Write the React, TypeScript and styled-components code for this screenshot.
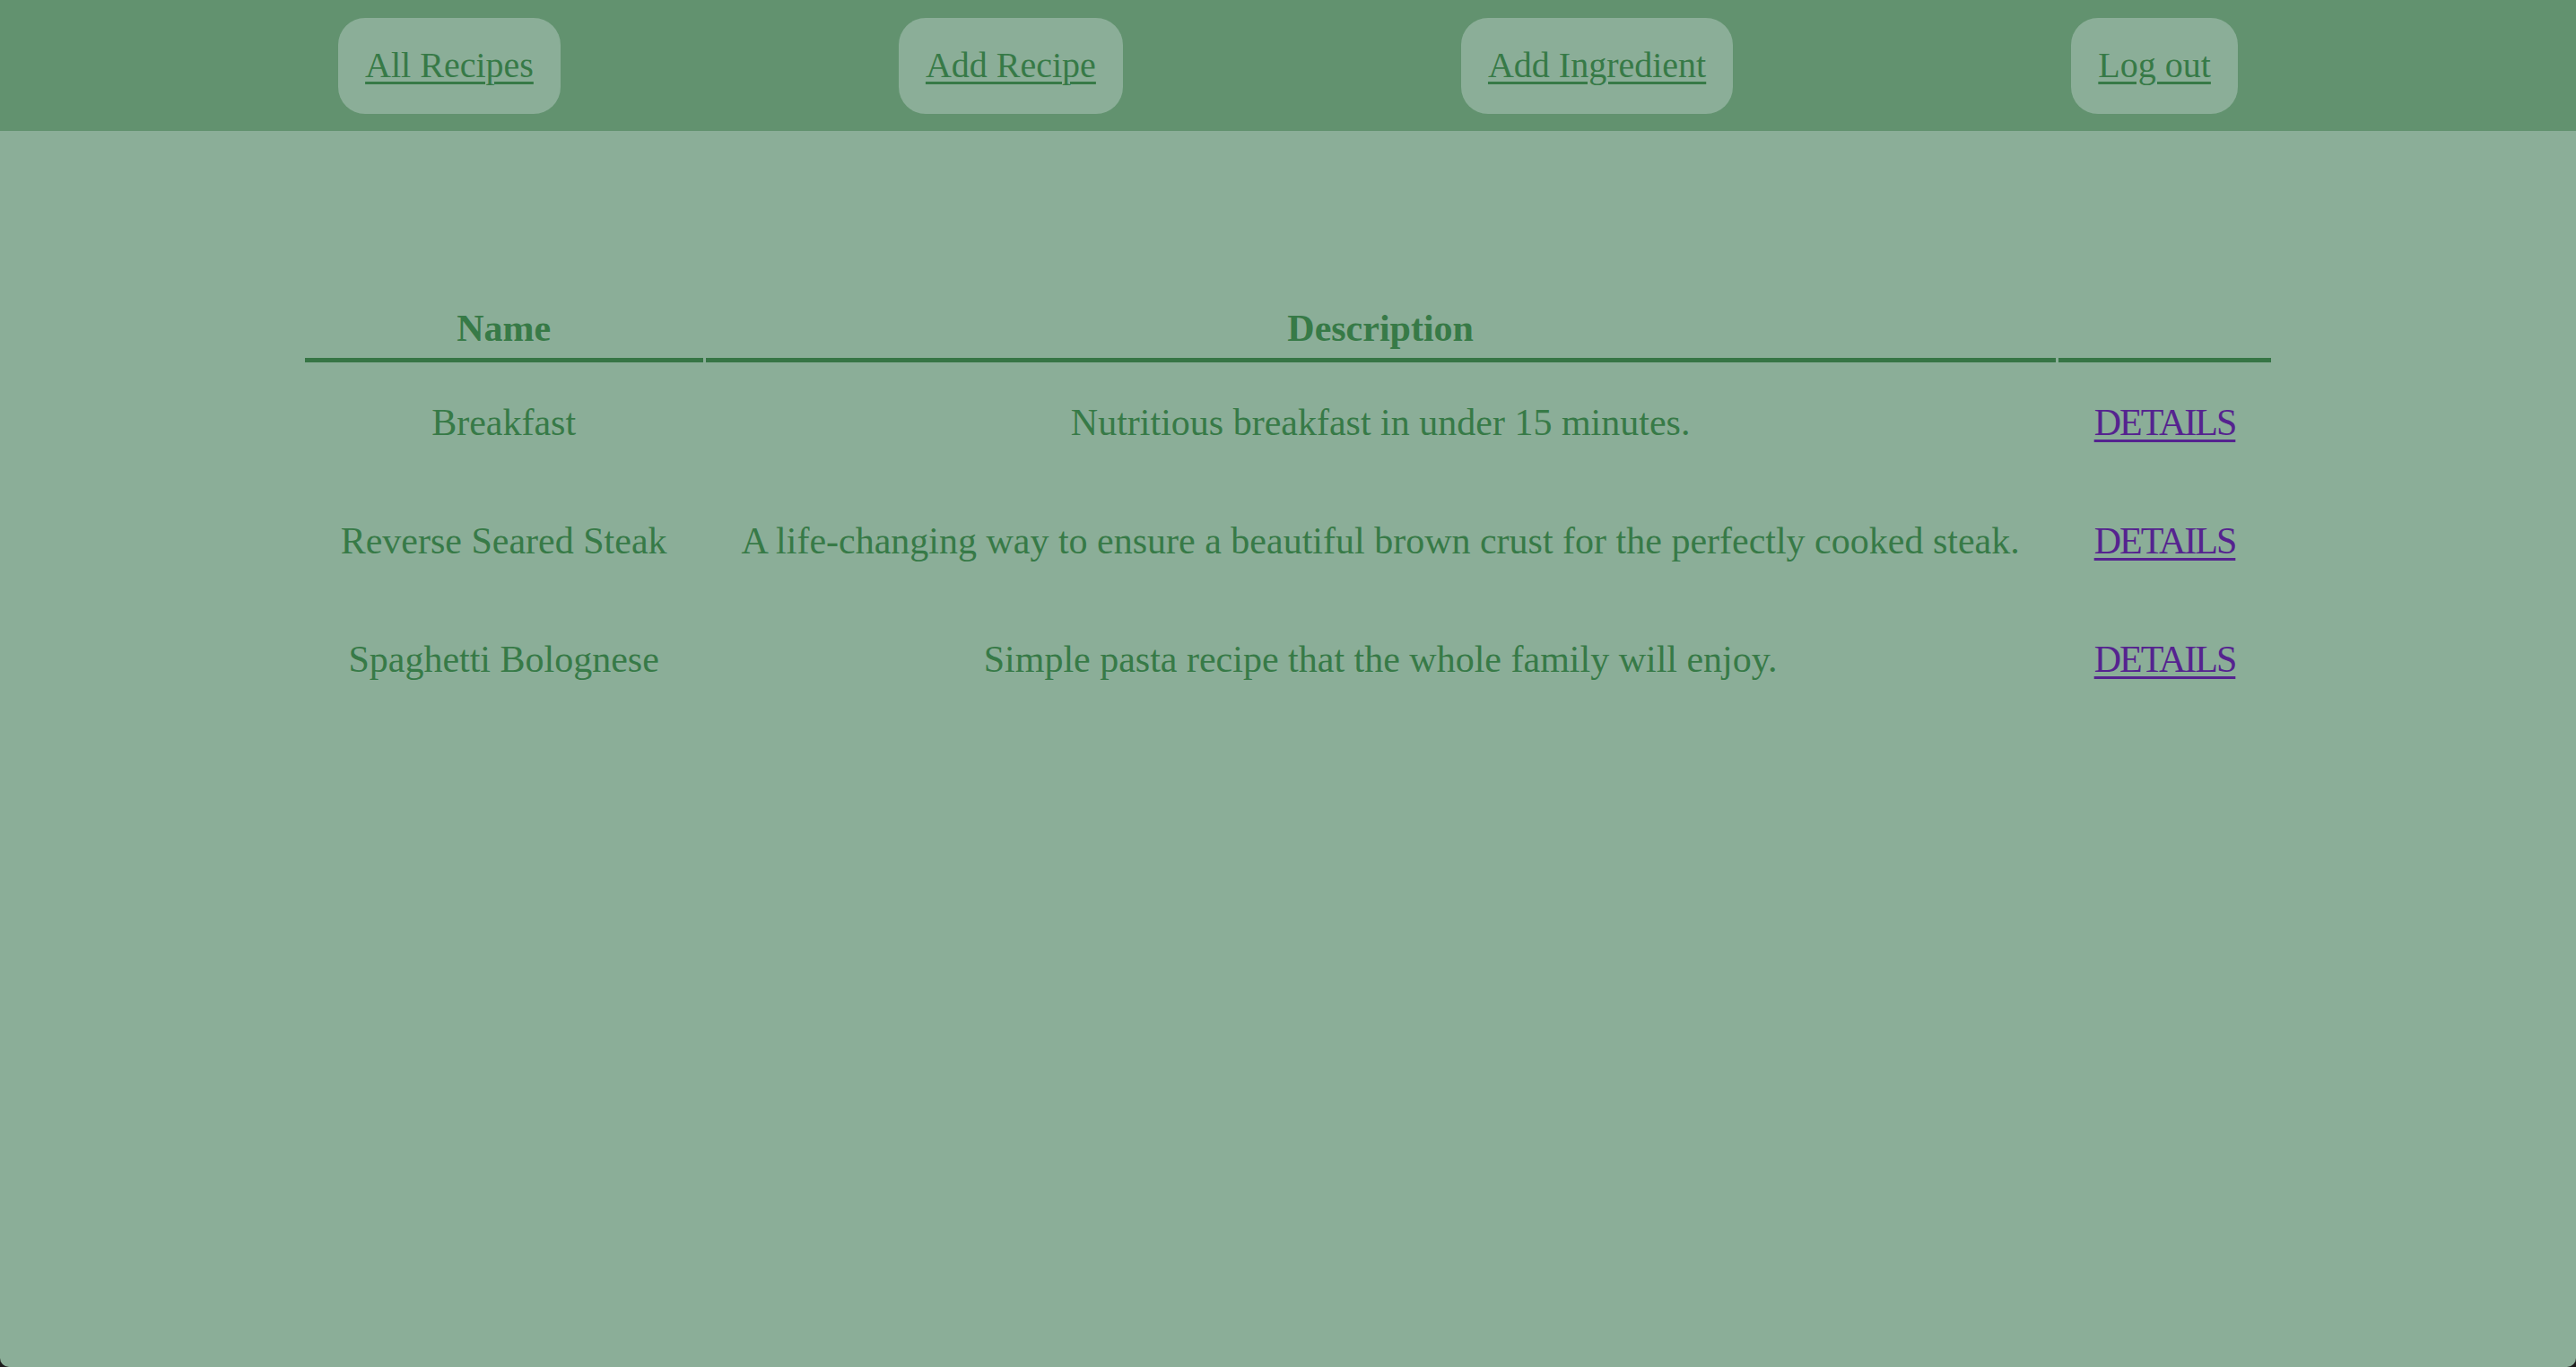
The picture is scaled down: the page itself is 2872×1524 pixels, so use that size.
import React from "react";
import styled, { createGlobalStyle } from "styled-components";

const GlobalStyle = createGlobalStyle`
  html, body {
    margin: 0;
    padding: 0;
    background: #1c1c1c;
  }
  body {
    font-family: "Liberation Serif", "Times New Roman", serif;
  }
`;

const Page = styled.div`
  min-height: 1524px;
  background: #8bae98;
  border-radius: 0 0 10px 10px;
  overflow: hidden;
  color: #377a47;
  font-size: 40px;
  line-height: 48px;
`;

const NavBar = styled.nav`
  height: 146px;
  background: #62926f;
  display: flex;
  align-items: center;
  justify-content: space-evenly;
`;

const NavItem = styled.div`
  background: #8bae98;
  border-radius: 30px;
  padding: 29px 30px 30px;
  display: flex;
  align-items: center;
`;

const NavLink = styled.a`
  color: #377a47;
  text-decoration: underline;
  text-decoration-thickness: 3px;
  text-underline-offset: 5px;
  cursor: pointer;
`;

const Main = styled.main`
  padding-top: 194px;
  display: flex;
  justify-content: center;
`;

const Table = styled.table`
  border-collapse: separate;
  border-spacing: 3px 2px;
  font-size: 42px;
`;

const HeadCell = styled.th`
  font-weight: bold;
  padding: 0 40px 9px;
  border-bottom: 5px solid #367545;
  text-align: center;
`;

const Cell = styled.td`
  padding: 41px 40px;
  text-align: center;
  white-space: nowrap;
`;

const DetailsLink = styled.a`
  color: #55238f;
  letter-spacing: -2px;
  text-decoration: underline;
  text-decoration-thickness: 3px;
  text-underline-offset: 5px;
  cursor: pointer;
`;

const recipes = [
  { name: "Breakfast", description: "Nutritious breakfast in under 15 minutes." },
  {
    name: "Reverse Seared Steak",
    description:
      "A life-changing way to ensure a beautiful brown crust for the perfectly cooked steak.",
  },
  { name: "Spaghetti Bolognese", description: "Simple pasta recipe that the whole family will enjoy." },
];

const navItems = ["All Recipes", "Add Recipe", "Add Ingredient", "Log out"];

export default function App() {
  return (
    <>
      <GlobalStyle />
      <Page>
        <NavBar>
          {navItems.map((label) => (
            <NavItem key={label}>
              <NavLink href="#">{label}</NavLink>
            </NavItem>
          ))}
        </NavBar>
        <Main>
          <Table>
            <thead>
              <tr>
                <HeadCell>Name</HeadCell>
                <HeadCell>Description</HeadCell>
                <HeadCell />
              </tr>
            </thead>
            <tbody>
              {recipes.map((r) => (
                <tr key={r.name}>
                  <Cell>{r.name}</Cell>
                  <Cell>{r.description}</Cell>
                  <Cell>
                    <DetailsLink href="#">DETAILS</DetailsLink>
                  </Cell>
                </tr>
              ))}
            </tbody>
          </Table>
        </Main>
      </Page>
    </>
  );
}
